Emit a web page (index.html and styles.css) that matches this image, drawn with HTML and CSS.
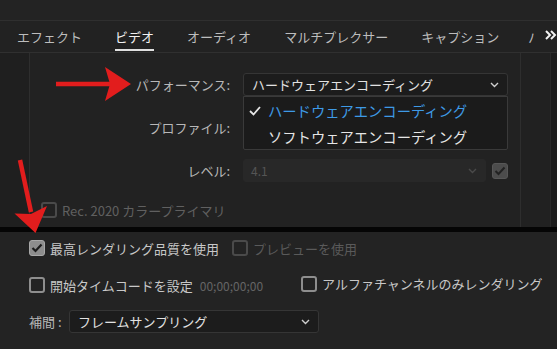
FILE: index.html
```html
<!DOCTYPE html>
<html lang="ja">
<head>
<meta charset="utf-8">
<link rel="stylesheet" href="styles.css">
</head>
<body>
<div class="app">
  <div class="topbar"></div>
  <nav class="tabs">
    <div class="tab-list">
      <span class="tab">エフェクト</span>
      <span class="tab active">ビデオ</span>
      <span class="tab">オーディオ</span>
      <span class="tab">マルチプレクサー</span>
      <span class="tab">キャプション</span>
      <span class="tab last">パブリッシュ</span>
    </div>
    <div class="more">
      <svg width="12" height="10" viewBox="0 0 12 10"><polyline points="1,1 5,5 1,9" fill="none" stroke="#f2f2f2" stroke-width="2"/><polyline points="6,1 10,5 6,9" fill="none" stroke="#f2f2f2" stroke-width="2"/></svg>
    </div>
  </nav>
  <div class="main">
    <div class="gutter"></div>
    <div class="content">
      <div class="field">
        <span class="label">パフォーマンス:</span>
        <div class="select-wrap">
          <div class="select"><span>ハードウェアエンコーディング</span><svg class="chev" width="9" height="6" viewBox="0 0 9 6"><polyline points="1,1 4.5,4.5 8,1" fill="none" stroke="#cfcfcf" stroke-width="1.4"/></svg></div>
          <div class="menu">
            <div class="menu-item selected"><svg class="tick" width="12" height="10" viewBox="0 0 12 10"><polyline points="1,5 4.5,8.5 11,1" fill="none" stroke="#e6e6e6" stroke-width="1.8"/></svg>ハードウェアエンコーディング</div>
            <div class="menu-item">ソフトウェアエンコーディング</div>
          </div>
        </div>
      </div>
      <div class="field">
        <span class="label">プロファイル:</span>
        <div class="select-wrap">
          <div class="select"></div>
        </div>
      </div>
      <div class="field">
        <span class="label">レベル:</span>
        <div class="select select-disabled short"><span>4.1</span><svg class="chev" width="9" height="6" viewBox="0 0 9 6"><polyline points="1,1 4.5,4.5 8,1" fill="none" stroke="#4a4a4a" stroke-width="1.4"/></svg></div>
        <span class="cb cb-disabled-checked"><svg width="12" height="10" viewBox="0 0 12 10"><polyline points="1.5,5 4.5,8 10.5,1.5" fill="none" stroke="#222" stroke-width="2"/></svg></span>
      </div>
      <div class="check-row rec">
        <span class="cb cb-disabled"></span>
        <span class="muted">Rec. 2020 カラープライマリ</span>
      </div>
    </div>
    <div class="side"></div>
    <div class="scroll"></div>
  </div>
  <div class="sep"></div>
  <div class="bottom">
    <div class="brow">
      <span class="opt"><span class="cb cb-checked"><svg width="12" height="10" viewBox="0 0 12 10"><polyline points="1.5,5 4.5,8 10.5,1.5" fill="none" stroke="#1c1c1c" stroke-width="2.2"/></svg></span><span class="opt-text">最高レンダリング品質を使用</span></span>
      <span class="opt gap-l"><span class="cb cb-disabled"></span><span class="opt-text muted">プレビューを使用</span></span>
    </div>
    <div class="brow">
      <span class="opt"><span class="cb"></span><span class="opt-text">開始タイムコードを設定</span></span>
      <span class="timecode">00;00;00;00</span>
      <span class="opt alpha"><span class="cb"></span><span class="opt-text">アルファチャンネルのみレンダリング</span></span>
    </div>
    <div class="brow interp">
      <span class="ilabel">補間 :</span>
      <div class="select wide"><span>フレームサンプリング</span><svg class="chev" width="9" height="6" viewBox="0 0 9 6"><polyline points="1,1 4.5,4.5 8,1" fill="none" stroke="#cfcfcf" stroke-width="1.4"/></svg></div>
    </div>
  </div>
  <svg class="arrows" width="557" height="349" viewBox="0 0 557 349">
    <line x1="56" y1="84" x2="110" y2="84" stroke="#e21d1d" stroke-width="4.5"/>
    <polygon points="105,67 131,84 105,101 110,84" fill="#e21d1d"/>
    <line x1="20" y1="160" x2="31" y2="212" stroke="#e21d1d" stroke-width="4.5"/>
    <polygon points="14.5,213.5 35.5,233 47,206 31,214" fill="#e21d1d"/>
  </svg>
</div>
</body>
</html>
```

FILE: styles.css
```css
* { box-sizing: border-box; }
html, body { margin: 0; padding: 0; background: #222222; }
body {
  font-family: "Noto Sans CJK JP", "Noto Sans", sans-serif;
  color: #c4c4c4;
}
.app {
  position: relative;
  width: 557px;
  height: 349px;
  overflow: hidden;
  display: flex;
  flex-direction: column;
  background: #222222;
}
.topbar {
  height: 21px;
  flex: none;
  background: #232323;
  border-bottom: 1px solid #2f2f2f;
}
.tabs {
  height: 32px;
  flex: none;
  display: flex;
  border-bottom: 1px solid #303030;
  background: #222222;
}
.tab-list {
  width: 535px;
  flex: none;
  overflow: hidden;
  display: flex;
  gap: 33px;
  padding-left: 17px;
  white-space: nowrap;
}
.tab {
  position: relative;
  height: 31px;
  display: flex;
  align-items: center;
  font-size: 13px;
  color: #bdbdbd;
  flex: none;
}
.tab.last { margin-left: -4px; }
.tab.active { color: #f2f2f2; }
.tab.active::after {
  content: "";
  position: absolute;
  left: 0;
  right: 0;
  bottom: 1px;
  height: 2px;
  background: #e0e0e0;
}
.more {
  flex: 1;
  display: flex;
  align-items: center;
  padding-left: 10px;
  padding-bottom: 3px;
  background: #222222;
}
.main {
  height: 174px;
  flex: none;
  display: flex;
}
.gutter {
  width: 30px;
  flex: none;
  background: #1f1f1f;
  border-right: 1px solid #2e2e2e;
}
.content {
  width: 490px;
  flex: none;
  display: flex;
  flex-direction: column;
  gap: 20px;
  padding-top: 20px;
}
.side {
  width: 30px;
  flex: none;
  border-left: 1px solid #2e2e2e;
  background: #212121;
}
.scroll {
  flex: 1;
  border-left: 1px solid #2a2a2a;
  background: #1d1d1d;
}
.field {
  height: 23px;
  display: flex;
  align-items: center;
}
.label {
  width: 200px;
  flex: none;
  text-align: right;
  font-size: 13px;
  color: #b8b8b8;
  margin-right: 13px;
}
.select-wrap {
  position: relative;
  width: 265px;
  height: 23px;
}
.select {
  width: 265px;
  height: 23px;
  flex: none;
  display: flex;
  align-items: center;
  justify-content: space-between;
  padding: 0 8px 0 8px;
  background: #1c1c1c;
  border: 1px solid #353535;
  border-radius: 3px;
  font-size: 13px;
  color: #e2e2e2;
  white-space: nowrap;
}
.select-disabled {
  background: #282828;
  border-color: #282828;
  color: #555555;
  font-size: 12px;
  padding-left: 7px;
}
.select.short { width: 243px; margin-right: 6px; }
.chev { flex: none; }
.menu {
  position: absolute;
  top: 100%;
  left: 0;
  width: 265px;
  z-index: 2;
  background: #1b1b1b;
  border: 1px solid #3a3a3a;
  border-radius: 0 0 2px 2px;
}
.menu-item {
  height: 26px;
  display: flex;
  align-items: center;
  padding-left: 24px;
  font-size: 14.3px;
  color: #e6e6e6;
  position: relative;
  white-space: nowrap;
}
.menu-item.selected { color: #3e9ae6; }
.tick { position: absolute; left: 5px; top: 9px; }
.cb {
  width: 16px;
  height: 16px;
  flex: none;
  border: 2px solid #8e8e8e;
  border-radius: 3px;
  display: inline-flex;
  align-items: center;
  justify-content: center;
}
.cb-checked {
  background: #8d8d8d;
  border: 1px solid #a8a8a8;
}
.cb-disabled { border-color: #4a4a4a; }
.cb-disabled-checked {
  background: #4c4c4c;
  border: 1px solid #575757;
}
.check-row {
  display: flex;
  align-items: center;
  height: 20px;
}
.rec { margin-top: -2px; padding-left: 11px; gap: 5px; }
.muted { color: #5b5b5b; font-size: 13px; white-space: nowrap; }
.rec .muted { color: #606060; }
.sep {
  height: 5px;
  flex: none;
  background: #050505;
}
.bottom {
  flex: 1;
  background: #232323;
  padding: 6px 0 0 29px;
  display: flex;
  flex-direction: column;
}
.brow {
  height: 20px;
  display: flex;
  align-items: center;
  white-space: nowrap;
}
.brow + .brow { margin-top: 17px; }
.brow.interp { margin-top: 15px; height: 23px; }
.opt {
  display: flex;
  align-items: center;
  gap: 5px;
  flex: none;
}
.opt-text { font-size: 13px; color: #c8c8c8; white-space: nowrap; }
.opt-text.muted { color: #5a5a5a; }
.gap-l { margin-left: 13px; }
.timecode {
  margin-left: 7px;
  font-size: 12px;
  color: #656565;
  flex: none;
}
.alpha { margin-left: 38px; margin-top: -3px; }
.ilabel {
  width: 40px;
  flex: none;
  font-size: 13px;
  color: #b8b8b8;
}
.select.wide { width: 250px; }
.arrows {
  position: absolute;
  left: 0;
  top: 0;
  pointer-events: none;
  z-index: 5;
}
```
